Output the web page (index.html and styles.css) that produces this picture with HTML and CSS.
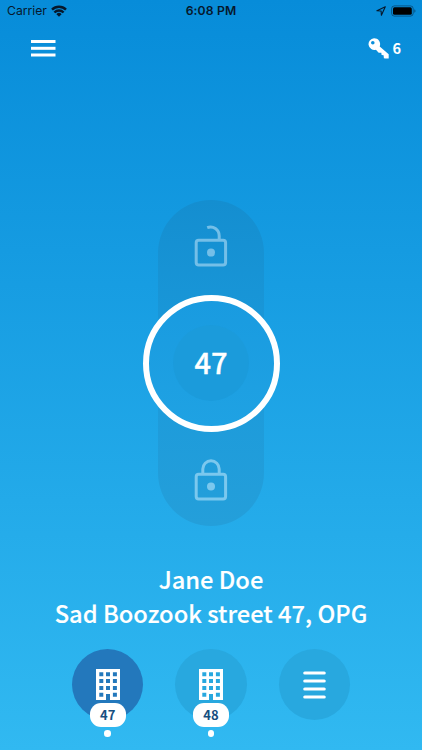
FILE: index.html
```html
<!DOCTYPE html>
<html lang="en">
<head>
    <meta charset="UTF-8">
    <meta name="viewport" content="width=device-width, initial-scale=1.0">
    <title>Door Lock</title>
    <link rel="stylesheet" href="styles.css">
</head>
<body>

<div class="status-bar">
    <div class="carrier">
        <span>Carrier</span>
        <svg width="16" height="12" viewBox="0 0 16 12" fill="none" stroke="#06182c" stroke-width="2.4">
            <path d="M1 4.6a9.9 9.9 0 0 1 14 0"/>
            <path d="M3.4 7.5a6.4 6.4 0 0 1 9.2 0"/>
            <path d="M8 11.7L5.4 9.2a3.6 3.6 0 0 1 5.2 0z" fill="#06182c" stroke="none"/>
        </svg>
    </div>
    <div class="time">6:08 PM</div>
    <div class="indicators">
        <svg width="10" height="10" viewBox="0 0 10 10" fill="none" stroke="#06182c" stroke-width="1.1" stroke-linejoin="round">
            <path d="M9.3.8L.9 4.8l4.2.2.3 4.2z"/>
        </svg>
        <svg width="26" height="12" viewBox="0 0 26 12">
            <rect x=".6" y=".9" width="21.6" height="10.2" rx="2.8" fill="none" stroke="#06182c" stroke-opacity=".45"/>
            <rect x="2" y="2.3" width="18.8" height="7.4" rx="1.5" fill="#000"/>
            <path d="M23.3 4.3c1.6.7 1.6 2.7 0 3.4z" fill="#06182c" fill-opacity=".5"/>
        </svg>
    </div>
</div>

<header class="header">
    <svg width="25" height="17" viewBox="0 0 25 17" fill="#fff">
        <rect x="0" y="0" width="24.5" height="3"/>
        <rect x="0" y="6.8" width="24.5" height="3"/>
        <rect x="0" y="13.5" width="24.5" height="3"/>
    </svg>
    <div class="keys">
        <svg width="21" height="21" viewBox="0 0 21 21" fill="#fff">
            <path fill-rule="evenodd" d="M6 .2a5.9 5.9 0 1 0 1.9 11.6l2.8 2.9h2.6l.3 2.2 2 .3.3 3 1.4.4h3.4v-4.3l-9-7.9A6 6 0 0 0 6 .2zM4.8 2.9a1.8 1.8 0 1 1 0 3.6 1.8 1.8 0 0 1 0-3.6z"/>
        </svg>
        <span>6</span>
    </div>
</header>

<main class="lock">
    <div class="track">
        <svg width="34" height="44" viewBox="0 0 34 44" fill="none" stroke="#74bfe8" stroke-width="3">
            <rect x="2.2" y="16.3" width="29.4" height="24.6" rx="2.5"/>
            <path d="M13.2 3.7c6-2.2 12 1.8 12 8.3v4"/>
            <circle cx="17" cy="28.6" r="4" fill="#74bfe8" stroke="none"/>
        </svg>
        <svg width="34" height="44" viewBox="0 0 34 44" fill="none" stroke="#7bc8ee" stroke-width="3">
            <rect x="2.2" y="16.3" width="29.4" height="24.6" rx="2.5"/>
            <path d="M8.8 16v-5a8.2 8.2 0 0 1 16.4 0v5"/>
            <circle cx="17" cy="28.6" r="4" fill="#7bc8ee" stroke="none"/>
        </svg>
    </div>
    <div class="knob">
        <div class="knob-center">47</div>
    </div>
</main>

<section class="address">
    <div>Jane Doe</div>
    <div>Sad Boozook street 47, OPG</div>
</section>

<nav class="doors">
    <div class="door active">
        <div class="door-icon">
            <svg width="24" height="31" viewBox="0 0 24 31" fill="#fff">
                <path fill-rule="evenodd" d="M0 0h24v31H14v-6h-4v6H0zM3.3 3.3v4h4v-4zM10 3.3v4h4v-4zM16.9 3.3v4h4v-4zM3.3 10.1v4h4v-4zM10 10.1v4h4v-4zM16.9 10.1v4h4v-4zM3.3 16.9v4h4v-4zM10 16.9v4h4v-4zM16.9 16.9v4h4v-4zM3.3 23.7v4h4v-4zM16.9 23.7v4h4v-4z"/>
            </svg>
        </div>
        <span class="badge">47</span>
        <span class="dot"></span>
    </div>
    <div class="door">
        <div class="door-icon">
            <svg width="24" height="31" viewBox="0 0 24 31" fill="#fff">
                <path fill-rule="evenodd" d="M0 0h24v31H14v-6h-4v6H0zM3.3 3.3v4h4v-4zM10 3.3v4h4v-4zM16.9 3.3v4h4v-4zM3.3 10.1v4h4v-4zM10 10.1v4h4v-4zM16.9 10.1v4h4v-4zM3.3 16.9v4h4v-4zM10 16.9v4h4v-4zM16.9 16.9v4h4v-4zM3.3 23.7v4h4v-4zM16.9 23.7v4h4v-4z"/>
            </svg>
        </div>
        <span class="badge">48</span>
        <span class="dot"></span>
    </div>
    <div class="door">
        <div class="door-icon">
            <svg width="23" height="28" viewBox="0 0 23 28" fill="none" stroke="#fff" stroke-width="3.2" stroke-linecap="round">
                <path d="M1.8 2h19.4M1.8 10h19.4M1.8 18h19.4M1.8 26h19.4"/>
            </svg>
        </div>
    </div>
</nav>

</body>
</html>
```

FILE: styles.css
```css
body {
    margin: 0;
    height: 750px;
    overflow: hidden;
    display: flex;
    flex-direction: column;
    background: linear-gradient(#078cd9, #31b9f1);
    color: #fff;
    font-family: "Noto Sans CJK JP", "Noto Sans", sans-serif;
    font-weight: 500;
}
svg {
    display: block;
}
.status-bar {
    height: 22px;
    display: grid;
    grid-template-columns: 1fr auto 1fr;
    align-items: center;
    padding: 0 5px 0 7px;
    color: #06182c;
    font: 400 12.2px/22px Inter, sans-serif;
}
.carrier {
    display: flex;
    align-items: center;
    gap: 4px;
}
.time {
    font-weight: 600;
    letter-spacing: 0.15px;
    padding-right: 2px;
}
.indicators {
    display: flex;
    align-items: center;
    justify-content: flex-end;
    gap: 5px;
}
.header {
    height: 52px;
    display: flex;
    align-items: center;
    justify-content: space-between;
    padding: 0 21px 0 31px;
    margin-bottom: 126px;
}
.keys {
    display: flex;
    align-items: center;
    gap: 3px;
    font-size: 14.5px;
    font-weight: 700;
    line-height: 20px;
}
.lock {
    display: grid;
    place-items: center;
    height: 326px;
}
.track,
.knob {
    grid-area: 1 / 1;
}
.track {
    box-sizing: border-box;
    width: 106.5px;
    height: 326px;
    padding: 24px 0;
    border-radius: 54px;
    background: linear-gradient(#148ed0, #1b9adb 50%, #249fda);
    display: flex;
    flex-direction: column;
    align-items: center;
    justify-content: space-between;
}
.knob {
    width: 125px;
    height: 125px;
    border: 6px solid #fff;
    border-radius: 50%;
    background: linear-gradient(#199be0, #1fa2e3);
    display: flex;
    align-items: center;
    justify-content: center;
}
.knob-center {
    width: 76px;
    height: 76px;
    border-radius: 50%;
    background: #1b9bdb;
    font-size: 29px;
    line-height: 72px;
    text-align: center;
    -webkit-text-stroke: 0.3px #fff;
}
.address {
    margin-top: 36px;
    font-size: 23.7px;
    line-height: 34px;
    text-align: center;
    white-space: nowrap;
    -webkit-text-stroke: 0.15px #fff;
}
.doors {
    margin-top: 19px;
    display: flex;
    justify-content: center;
    gap: 32px;
}
.door {
    width: 71.3px;
    display: flex;
    flex-direction: column;
    align-items: center;
}
.door-icon {
    width: 71.3px;
    height: 71.3px;
    border-radius: 50%;
    background: #28a8df;
    display: flex;
    align-items: center;
    justify-content: center;
}
.active .door-icon {
    background: #2378bc;
}
.badge {
    width: 36px;
    height: 24px;
    margin-top: -17px;
    border-radius: 11px;
    background: #fff;
    color: #174f80;
    font-size: 13px;
    font-weight: 700;
    line-height: 24px;
    text-align: center;
}
.dot {
    width: 6.6px;
    height: 6.6px;
    margin-top: 3px;
    border-radius: 50%;
    background: #fff;
}
```
